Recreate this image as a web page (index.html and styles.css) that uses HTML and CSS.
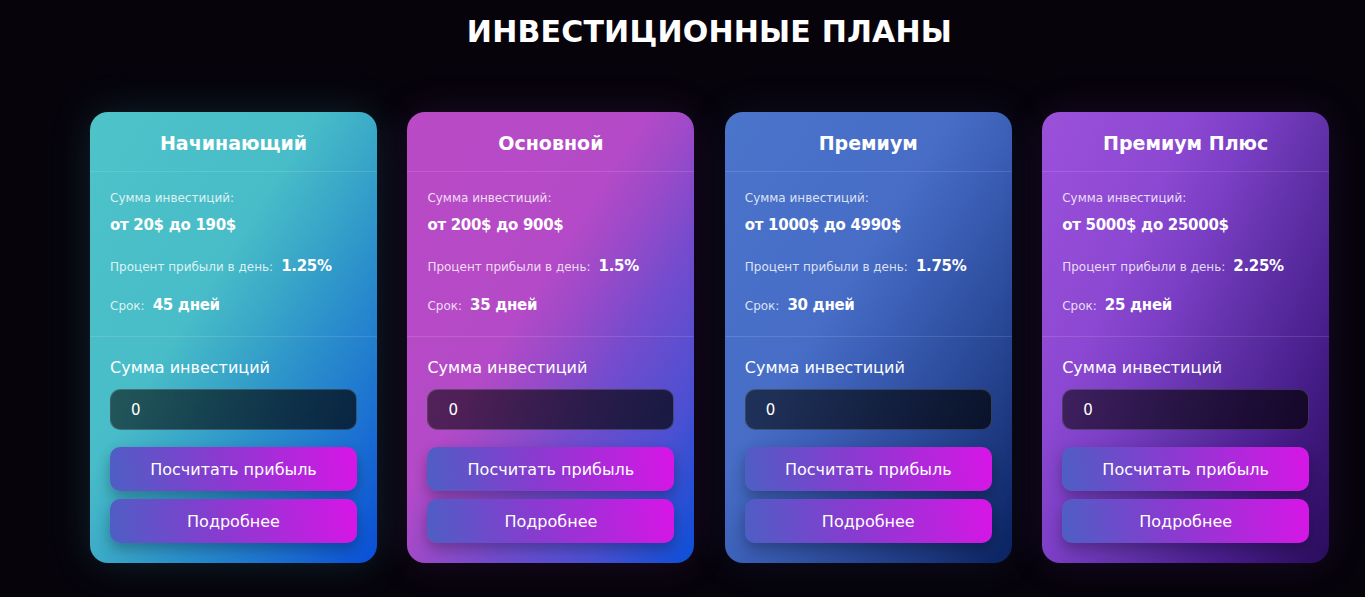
FILE: index.html
```html
<!DOCTYPE html>
<html lang="ru">
<head>
<meta charset="utf-8">
<title>Инвестиционные планы</title>
<link rel="stylesheet" href="styles.css">
</head>
<body>
<section class="plans">
  <h1 class="plans-title">ИНВЕСТИЦИОННЫЕ ПЛАНЫ</h1>
  <div class="plans-grid">
    <div class="card card-1">
      <div class="card-head">Начинающий</div>
      <div class="card-info">
        <div class="info-label">Сумма инвестиций:</div>
        <div class="info-range">от 20$ до 190$</div>
        <div class="info-row"><span class="info-label">Процент прибыли в день:</span><span class="info-value">1.25%</span></div>
        <div class="info-row"><span class="info-label">Срок:</span><span class="info-value">45 дней</span></div>
      </div>
      <div class="card-calc">
        <div class="calc-label">Сумма инвестиций</div>
        <div class="calc-input">0</div>
        <div class="btn">Посчитать прибыль</div>
        <div class="btn">Подробнее</div>
      </div>
    </div>
    <div class="card card-2">
      <div class="card-head">Основной</div>
      <div class="card-info">
        <div class="info-label">Сумма инвестиций:</div>
        <div class="info-range">от 200$ до 900$</div>
        <div class="info-row"><span class="info-label">Процент прибыли в день:</span><span class="info-value">1.5%</span></div>
        <div class="info-row"><span class="info-label">Срок:</span><span class="info-value">35 дней</span></div>
      </div>
      <div class="card-calc">
        <div class="calc-label">Сумма инвестиций</div>
        <div class="calc-input">0</div>
        <div class="btn">Посчитать прибыль</div>
        <div class="btn">Подробнее</div>
      </div>
    </div>
    <div class="card card-3">
      <div class="card-head">Премиум</div>
      <div class="card-info">
        <div class="info-label">Сумма инвестиций:</div>
        <div class="info-range">от 1000$ до 4990$</div>
        <div class="info-row"><span class="info-label">Процент прибыли в день:</span><span class="info-value">1.75%</span></div>
        <div class="info-row"><span class="info-label">Срок:</span><span class="info-value">30 дней</span></div>
      </div>
      <div class="card-calc">
        <div class="calc-label">Сумма инвестиций</div>
        <div class="calc-input">0</div>
        <div class="btn">Посчитать прибыль</div>
        <div class="btn">Подробнее</div>
      </div>
    </div>
    <div class="card card-4">
      <div class="card-head">Премиум Плюс</div>
      <div class="card-info">
        <div class="info-label">Сумма инвестиций:</div>
        <div class="info-range">от 5000$ до 25000$</div>
        <div class="info-row"><span class="info-label">Процент прибыли в день:</span><span class="info-value">2.25%</span></div>
        <div class="info-row"><span class="info-label">Срок:</span><span class="info-value">25 дней</span></div>
      </div>
      <div class="card-calc">
        <div class="calc-label">Сумма инвестиций</div>
        <div class="calc-input">0</div>
        <div class="btn">Посчитать прибыль</div>
        <div class="btn">Подробнее</div>
      </div>
    </div>
  </div>
</section>
</body>
</html>
```

FILE: styles.css
```css
* { box-sizing: border-box; }
html, body { margin: 0; height: 100%; }
body {
  background: #06030b;
  color: #fff;
  font-family: "DejaVu Sans", "Noto Sans", sans-serif;
  overflow: hidden;
}
.plans {
  padding: 0 36px 0 90px;
}
.plans-title {
  margin: 0;
  padding-top: 14px;
  height: 112px;
  text-align: center;
  font-size: 30px;
  font-weight: 600;
  letter-spacing: 0.2px;
}
.plans-grid {
  display: grid;
  grid-template-columns: repeat(4, 287px);
  column-gap: 30.4px;
}
.card {
  height: 451px;
  border-radius: 18px;
  display: flex;
  flex-direction: column;
}
.card-1 {
  background: linear-gradient(to bottom right, #4ec3c8 0%, #48bcc8 40%, #3aa8c8 52%, #2a8ecb 66%, #1a6ed2 84%, #0a4dd8 100%);
  box-shadow: 0 0 40px rgba(60, 190, 200, 0.18);
}
.card-2 {
  background: linear-gradient(to bottom right, #ba4ac6 0%, #b44ac7 42%, #9a4ac9 52%, #744ccd 64%, #4a50d2 82%, #0a50d8 100%);
  box-shadow: 0 0 40px rgba(180, 70, 200, 0.14);
}
.card-3 {
  background: linear-gradient(to bottom right, #4b74cb 0%, #476dc6 40%, #3a5db4 54%, #2c4c9c 68%, #1b367c 86%, #0a2260 100%);
  box-shadow: 0 0 40px rgba(70, 110, 200, 0.12);
}
.card-4 {
  background: linear-gradient(115deg, #9c50da 0%, #8c48d2 30%, #7a3ec4 44%, #6232aa 58%, #4a1f8e 76%, #2a0d5c 100%);
  box-shadow: 0 0 40px rgba(150, 70, 210, 0.14);
}
.card-head {
  height: 60px;
  border-bottom: 1px solid rgba(255, 255, 255, 0.12);
  display: flex;
  align-items: center;
  justify-content: center;
  font-size: 19px;
  font-weight: 700;
  padding-top: 3px;
}
.card-info {
  padding: 18px 20px 0;
  height: 165px;
  border-bottom: 1px solid rgba(255, 255, 255, 0.12);
}
.info-label {
  font-size: 12px;
  line-height: 16px;
  color: rgba(255, 255, 255, 0.82);
}
.info-range {
  margin-top: 9px;
  font-size: 15px;
  line-height: 20px;
  font-weight: 700;
  letter-spacing: -0.3px;
}
.info-row {
  display: flex;
  align-items: baseline;
  gap: 8px;
  margin-top: 21px;
  line-height: 20px;
}
.info-row + .info-row { margin-top: 19px; }
.info-value {
  font-size: 15px;
  font-weight: 700;
  letter-spacing: -0.3px;
}
.card-calc {
  padding: 21px 20px 20px;
  display: flex;
  flex-direction: column;
}
.calc-label {
  font-size: 16px;
  line-height: 20px;
  font-weight: 500;
  margin-bottom: 11px;
}
.calc-input {
  height: 41px;
  border-radius: 10px;
  border: 1px solid rgba(255, 255, 255, 0.16);
  background: linear-gradient(90deg, rgba(0, 0, 0, 0.55), rgba(0, 0, 0, 0.68));
  display: flex;
  align-items: center;
  padding-left: 20px;
  font-size: 15px;
  margin-bottom: 17px;
}
.btn {
  height: 44px;
  border-radius: 10px;
  background: linear-gradient(80deg, #4d5fc4 0%, #8a3ad0 45%, #d815e6 100%);
  box-shadow: 0 6px 14px rgba(0, 0, 0, 0.28);
  display: flex;
  align-items: center;
  justify-content: center;
  font-size: 16px;
  font-weight: 500;
  margin-bottom: 8px;
}
.btn:last-child { margin-bottom: 0; }
```
